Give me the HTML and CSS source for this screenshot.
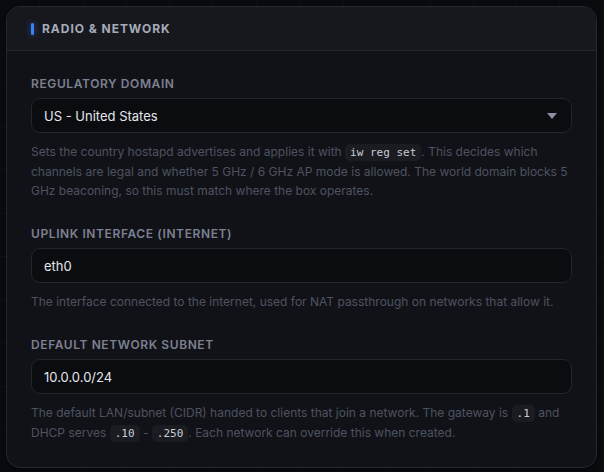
FILE: index.html
```html
<!DOCTYPE html>
<html>
<head>
<meta charset="utf-8">
<link rel="stylesheet" href="styles.css">
</head>
<body>
<section class="card">
  <header class="card-head">
    <span class="accent"></span>
    <h2 class="title">Radio &amp; Network</h2>
  </header>
  <div class="card-body">
    <div class="field">
      <label class="label">Regulatory Domain</label>
      <div class="select">
        <span class="value">US - United States</span>
        <svg class="caret" width="10" height="6" viewBox="0 0 10 6"><path d="M0 0h10L5 6z" fill="#8a90a0"/></svg>
      </div>
      <p class="help">Sets the country hostapd advertises and applies it with <code>iw reg set</code>. This decides which channels are legal and whether 5 GHz / 6 GHz AP mode is allowed. The world domain blocks 5 GHz beaconing, so this must match where the box operates.</p>
    </div>
    <div class="field">
      <label class="label">Uplink Interface (Internet)</label>
      <div class="input"><span class="value">eth0</span></div>
      <p class="help">The interface connected to the internet, used for NAT passthrough on networks that allow it.</p>
    </div>
    <div class="field">
      <label class="label">Default Network Subnet</label>
      <div class="input"><span class="value">10.0.0.0/24</span></div>
      <p class="help">The default LAN/subnet (CIDR) handed to clients that join a network. The gateway is <code>.1</code> and DHCP serves <code>.10</code> - <code>.250</code>. Each network can override this when created.</p>
    </div>
  </div>
</section>
</body>
</html>
```
FILE: styles.css
```css
html, body {
  margin: 0;
  padding: 0;
}
body {
  background-color: #0a0b0f;
  background-image:
    linear-gradient(to right, rgba(255,255,255,0.025) 1px, transparent 1px),
    linear-gradient(to bottom, rgba(255,255,255,0.025) 1px, transparent 1px);
  background-size: 43.33px 43.33px;
  background-position: -4px -4px;
  font-family: Inter, "Noto Sans", sans-serif;
  width: 604px;
  height: 472px;
  padding: 6px 7px 0 6px;
  box-sizing: border-box;
}
.card {
  background: #111217;
  border: 1px solid #252731;
  border-radius: 14px;
  overflow: hidden;
  box-shadow: 0 2px 6px rgba(0,0,0,0.5);
}
.card-head {
  display: flex;
  align-items: center;
  gap: 8px;
  height: 43px;
  padding: 0 24px;
  background: #17181e;
  border-bottom: 1px solid #23252e;
}
.accent {
  width: 3px;
  height: 12px;
  border-radius: 2px;
  background: #3b82f6;
  box-shadow: 0 0 6px rgba(59,130,246,0.6);
}
.title {
  margin: 0;
  font-size: 12px;
  font-weight: 700;
  letter-spacing: 0.08em;
  text-transform: uppercase;
  color: #a6acba;
}
.card-body {
  display: flex;
  flex-direction: column;
  gap: 26px;
  padding: 25px 24px 24px;
}
.field {
  display: flex;
  flex-direction: column;
}
.label {
  font-size: 12px;
  font-weight: 600;
  letter-spacing: 0.05em;
  text-transform: uppercase;
  color: #7c8191;
  line-height: 16px;
  margin-bottom: 6px;
}
.select, .input {
  display: flex;
  align-items: center;
  justify-content: space-between;
  height: 35px;
  box-sizing: border-box;
  padding: 0 12px;
  background: #0b0c10;
  border: 1px solid #23252e;
  border-radius: 9px;
}
.value {
  font-size: 13px;
  color: #e4e6eb;
}
.caret {
  margin-right: 2px;
}
.help {
  margin: 9px 0 0;
  font-size: 12px;
  line-height: 19px;
  color: #4d5261;
}
code {
  font-family: "DejaVu Sans Mono", "Liberation Mono", monospace;
  font-size: 11px;
  color: #c8ccd6;
  background: #1a1c22;
  padding: 2px 5px;
  border-radius: 5px;
}
```
